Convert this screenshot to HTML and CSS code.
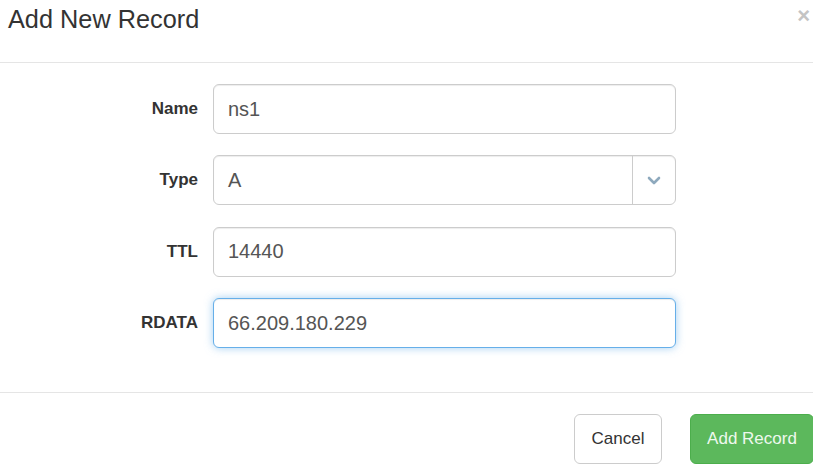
FILE: index.html
```html
<!DOCTYPE html>
<html lang="en">
<head>
  <meta charset="UTF-8">
  <title>Add New Record</title>
  <link rel="stylesheet" href="styles.css">
</head>
<body>
  <div class="modal">
    <div class="modal-header">
      <h4 class="modal-title">Add New Record</h4>
      <span class="close">&times;</span>
    </div>

    <div class="modal-body">
      <div class="form-group">
        <label for="name">Name</label>
        <input type="text" id="name" class="form-control" value="ns1">
      </div>
      <div class="form-group">
        <label for="type">Type</label>
        <div class="select-box">
          <span class="select-value">A</span>
          <span class="select-arrow">
            <svg width="14" height="9" viewBox="0 0 14 9"><path d="M2 2 L7 7 L12 2" fill="none" stroke="#8ea9bd" stroke-width="2.6" stroke-linecap="round" stroke-linejoin="round"/></svg>
          </span>
        </div>
      </div>
      <div class="form-group">
        <label for="ttl">TTL</label>
        <input type="text" id="ttl" class="form-control" value="14440">
      </div>
      <div class="form-group">
        <label for="rdata">RDATA</label>
        <input type="text" id="rdata" class="form-control focus" value="66.209.180.229">
      </div>
    </div>

    <div class="modal-footer">
      <button class="btn btn-default">Cancel</button>
      <button class="btn btn-success">Add Record</button>
    </div>
  </div>
</body>
</html>
```

FILE: styles.css
```css
body {
  margin: 0;
  font-family: "Liberation Sans", Arial, sans-serif;
  background-color: #fff;
  color: #333;
  overflow: hidden;
}
.modal {
  width: 813px;
}
.modal-header {
  display: flex;
  justify-content: space-between;
  align-items: flex-start;
  height: 62px;
  padding: 0 1px 0 8px;
  border-bottom: 1px solid #e5e5e5;
}
.modal-title {
  margin: 5px 0 0 0;
  font-size: 25.3px;
  font-weight: normal;
  color: #333;
  line-height: 28px;
}
.close {
  margin-top: 4px;
  font-size: 22px;
  font-weight: bold;
  color: #c4c4c4;
  line-height: 24px;
  padding-right: 2px;
}
.modal-body {
  padding: 21px 0 22px 0;
}
.form-group {
  display: flex;
  align-items: center;
  margin-bottom: 21.4px;
}
.form-group label {
  flex: 0 0 213px;
  text-align: right;
  padding-right: 15px;
  box-sizing: border-box;
  font-size: 17px;
  font-weight: bold;
  color: #333;
}
.form-control, .select-box {
  width: 463px;
  height: 50px;
  box-sizing: border-box;
  border: 1px solid #ccc;
  border-radius: 6px;
  padding: 0 14px;
  font-family: "Liberation Sans", Arial, sans-serif;
  font-size: 20px;
  color: #555;
  background: #fff;
  box-shadow: inset 0 1px 1px rgba(0, 0, 0, 0.075);
}
.form-control.focus {
  border-color: #66afe9;
  outline: 0;
  box-shadow: inset 0 1px 1px rgba(0, 0, 0, 0.075), 0 0 8px rgba(102, 175, 233, 0.6);
}
.select-box {
  display: flex;
  align-items: center;
  padding-right: 0;
}
.select-value {
  flex: 1;
}
.select-arrow {
  width: 42px;
  height: 100%;
  border-left: 1px solid #ccc;
  display: flex;
  align-items: center;
  justify-content: center;
}
.modal-footer {
  display: flex;
  justify-content: flex-end;
  gap: 28px;
  padding: 21px 0 0 0;
  border-top: 1px solid #e5e5e5;
}
.btn {
  height: 50px;
  padding: 0;
  white-space: nowrap;
  font-family: "Liberation Sans", Arial, sans-serif;
  font-size: 17px;
  border-radius: 6px;
  border: 1px solid #ccc;
  cursor: pointer;
}
.btn-default {
  background-color: #fff;
  color: #333;
  width: 88px;
}
.btn-success {
  background-color: #5cb85c;
  border-color: #4cae4c;
  color: #eef8ee;
  width: 124px;
  margin-right: -1px;
}
```
